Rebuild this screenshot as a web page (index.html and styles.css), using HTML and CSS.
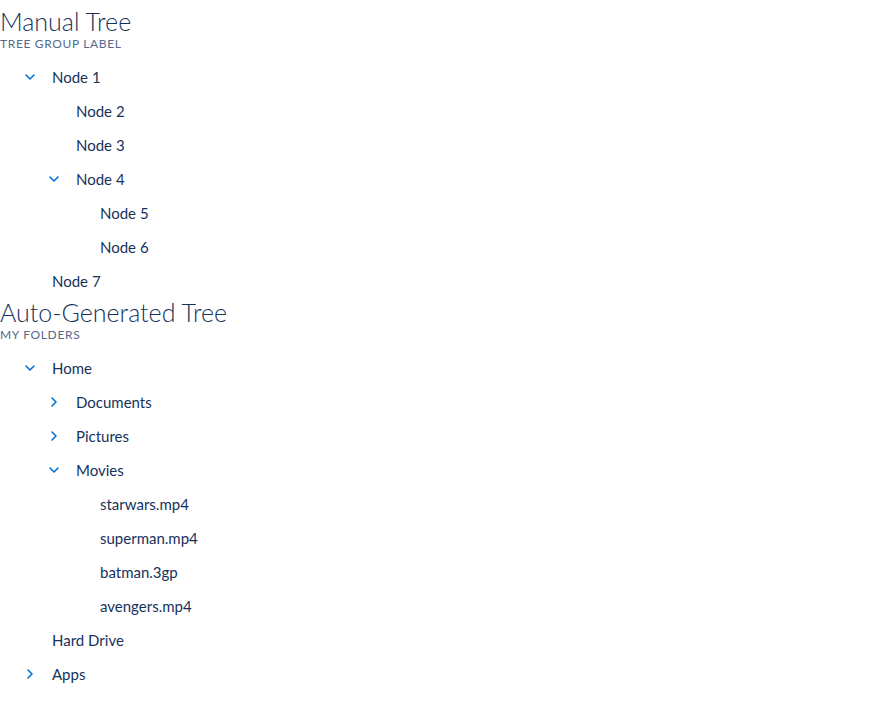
FILE: index.html
```html
<!DOCTYPE html>
<html>
<head>
<meta charset="utf-8">
<link rel="stylesheet" href="styles.css">
</head>
<body>
<section class="tree">
  <h2 class="title">Manual Tree</h2>
  <div class="group-label">Tree Group Label</div>
  <ul class="list">
    <li class="item lvl1"><span class="chev down"><svg viewBox="0 0 12 12"><path d="M2 4l4 4 4-4"/></svg></span><span class="label">Node 1</span></li>
    <li class="item lvl2"><span class="chev"></span><span class="label">Node 2</span></li>
    <li class="item lvl2"><span class="chev"></span><span class="label">Node 3</span></li>
    <li class="item lvl2"><span class="chev down"><svg viewBox="0 0 12 12"><path d="M2 4l4 4 4-4"/></svg></span><span class="label">Node 4</span></li>
    <li class="item lvl3"><span class="chev"></span><span class="label">Node 5</span></li>
    <li class="item lvl3"><span class="chev"></span><span class="label">Node 6</span></li>
    <li class="item lvl1"><span class="chev"></span><span class="label">Node 7</span></li>
  </ul>
</section>
<section class="tree">
  <h2 class="title">Auto-Generated Tree</h2>
  <div class="group-label">My Folders</div>
  <ul class="list">
    <li class="item lvl1"><span class="chev down"><svg viewBox="0 0 12 12"><path d="M2 4l4 4 4-4"/></svg></span><span class="label">Home</span></li>
    <li class="item lvl2"><span class="chev"><svg viewBox="0 0 12 12"><path d="M4 2l4 4-4 4"/></svg></span><span class="label">Documents</span></li>
    <li class="item lvl2"><span class="chev"><svg viewBox="0 0 12 12"><path d="M4 2l4 4-4 4"/></svg></span><span class="label">Pictures</span></li>
    <li class="item lvl2"><span class="chev down"><svg viewBox="0 0 12 12"><path d="M2 4l4 4 4-4"/></svg></span><span class="label">Movies</span></li>
    <li class="item lvl3"><span class="chev"></span><span class="label">starwars.mp4</span></li>
    <li class="item lvl3"><span class="chev"></span><span class="label">superman.mp4</span></li>
    <li class="item lvl3"><span class="chev"></span><span class="label">batman.3gp</span></li>
    <li class="item lvl3"><span class="chev"></span><span class="label">avengers.mp4</span></li>
    <li class="item lvl1"><span class="chev"></span><span class="label">Hard Drive</span></li>
    <li class="item lvl1"><span class="chev"><svg viewBox="0 0 12 12"><path d="M4 2l4 4-4 4"/></svg></span><span class="label">Apps</span></li>
  </ul>
</section>
</body>
</html>
```

FILE: styles.css
```css
html, body {
  margin: 0;
  padding: 0;
  background: #ffffff;
}
body {
  padding-top: 6px;
  font-family: Lato, "Noto Sans", sans-serif;
  color: #16325c;
  font-size: 15px;
}
.tree {
  display: flex;
  flex-direction: column;
}
.tree + .tree {
  margin-top: -1px;
}
.title {
  margin: 0;
  font-size: 25px;
  font-weight: 300;
  line-height: 30px;
  color: #16325c;
}
.group-label {
  margin-top: 1px;
  margin-bottom: 9px;
  font-size: 12px;
  line-height: 14px;
  text-transform: uppercase;
  letter-spacing: 0.65px;
  color: #54698d;
}
.list {
  list-style: none;
  margin: 0;
  padding: 0;
}
.item {
  display: flex;
  align-items: center;
  height: 34px;
}
.lvl1 { padding-left: 22px; }
.lvl2 { padding-left: 46px; }
.lvl3 { padding-left: 70px; }
.chev {
  width: 16px;
  height: 16px;
  margin-right: 14px;
  display: flex;
  align-items: center;
  justify-content: center;
}
.chev svg {
  width: 12px;
  height: 12px;
  fill: none;
  stroke: #0070d2;
  stroke-width: 1.6;
  stroke-linecap: round;
  stroke-linejoin: round;
}
.label {
  line-height: 20px;
}
```
